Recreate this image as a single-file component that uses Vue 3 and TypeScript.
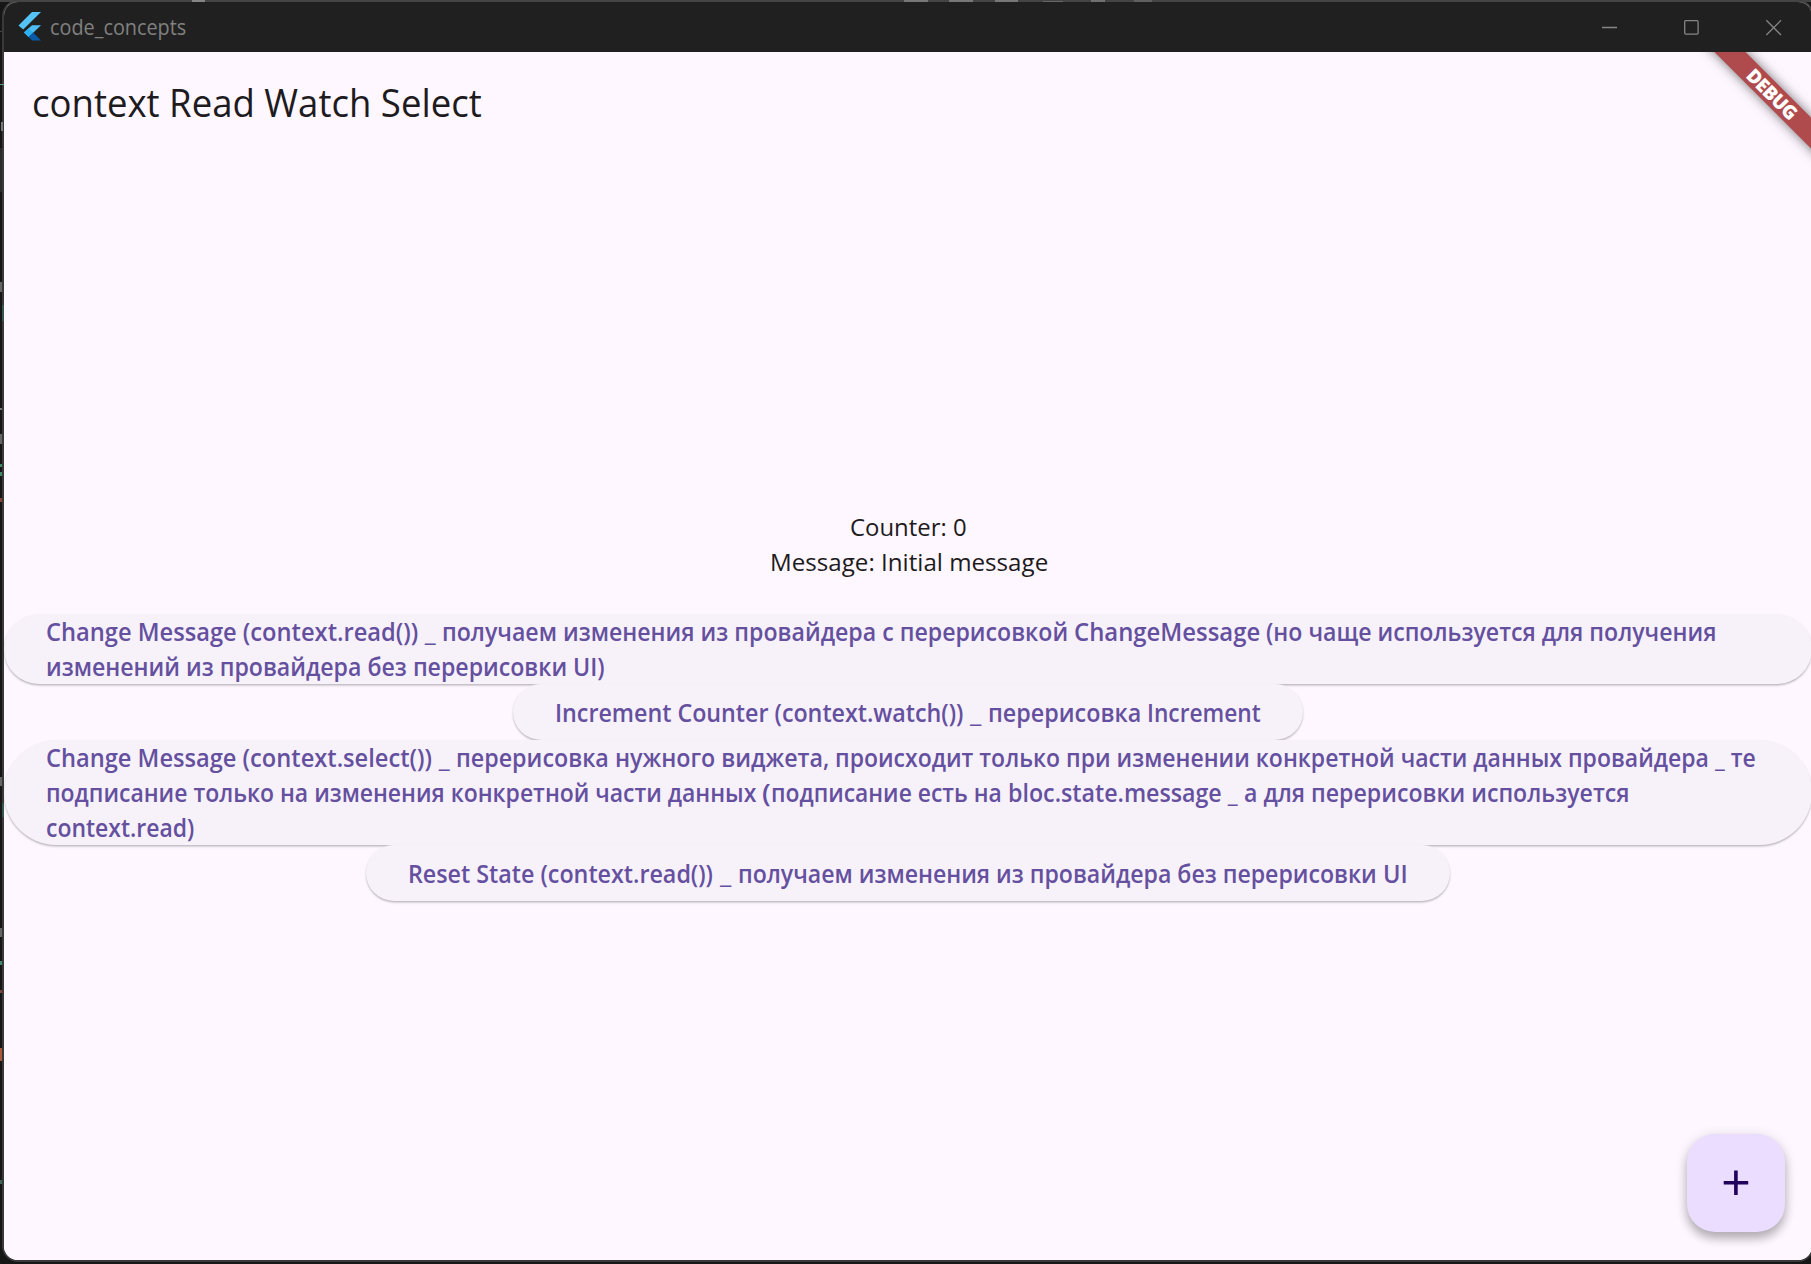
<template>
  <div class="desktop">
    <i v-for="(m, i) in marks" :key="i" class="mark" :style="{ left: m[0] + 'px', top: m[1] + 'px', width: m[2] + 'px', height: m[3] + 'px', background: m[4] }"></i>
    <div class="window">
      <header class="titlebar">
        <svg class="logo" width="24" height="30" viewBox="0 0 24 30">
          <path d="M14 0H23L5.2 17.5L0.5 13.5Z" fill="#56c3f7" />
          <path d="M14 13.2H23L15.2 20.8L10.6 25L6 20.6Z" fill="#4fbdf5" />
          <path d="M10.6 16.2L15.2 20.8L10.6 25L6 20.6Z" fill="#2cb0f0" />
          <path d="M10.6 25L15.2 20.6L23 28.4H14Z" fill="#0a5aa5" />
        </svg>
        <FitText class="caption" :parts="[['code_concepts', 136]]" />
        <svg class="controls" width="200" height="48" viewBox="0 0 200 48" fill="none" stroke="#858585" stroke-width="1.3">
          <path d="M2 24.5H17" />
          <rect x="84.7" y="17.7" width="13.4" height="13.4" rx="1" />
          <path d="M166.3 17.3L181 32M181 17.3L166.3 32" />
        </svg>
      </header>
      <main class="client">
        <h1 class="title"><FitText :parts="[['context Read Watch Select', 450]]" /></h1>
        <div class="banner"><span>DEBUG</span></div>
        <section class="content">
          <p><FitText :parts="[['Counter: 0', 117]]" /></p>
          <p><FitText :parts="[['Message: Initial message', 278]]" /></p>
          <div class="actions">
            <button v-for="(b, i) in buttons" :key="i" :class="{ wide: b.wide }">
              <FitText v-for="(line, j) in b.lines" :key="j" :parts="line" />
            </button>
          </div>
        </section>
        <button class="fab" aria-label="Increment">
          <svg width="26" height="26" viewBox="0 0 26 26"><path d="M0.7 12.8H25.2M12.9 0.6V25" stroke="#21005d" stroke-width="3.6" /></svg>
        </button>
      </main>
    </div>
  </div>
</template>

<script setup lang="ts">
import { defineComponent, h, onMounted, ref } from 'vue'

type Part = [string, number]

// Runs of text, each condensed or widened to its own width.
const FitText = defineComponent({
  props: { parts: { type: Array as () => Part[], required: true } },
  setup(props) {
    const root = ref<HTMLElement>()
    const scales = ref<number[]>(props.parts.map(() => 1))
    onMounted(() => {
      const runs = Array.from(root.value!.querySelectorAll<HTMLElement>('.run'))
      scales.value = runs.map((el, i) => props.parts[i][1] / el.offsetWidth)
    })
    return () =>
      h('span', { ref: root, class: 'fit' }, props.parts.map(([text, width], i) =>
        h('span', { class: 'slot', style: { width: `${width}px` } }, [
          h('span', { class: 'run', style: { transform: `scaleX(${scales.value[i]})` } }, text),
        ]),
      ))
  },
})

const buttons: { wide: boolean; lines: Part[][] }[] = [
  {
    wide: true,
    lines: [
      [['Change Message (context.read())', 372], [' _ ', 24], ['получаем изменения из провайдера с перерисовкой ', 632], ['ChangeMessage ', 192], ['(но чаще используется для получения', 450]],
      [['изменений из провайдера без перерисовки UI)', 559]],
    ],
  },
  {
    wide: false,
    lines: [[['Increment Counter (context.watch())', 408], [' _ ', 25], ['перерисовка ', 159], ['Increment', 114]]],
  },
  {
    wide: true,
    lines: [
      [['Change Message (context.select())', 386], [' _ ', 24], ['перерисовка нужного виджета, ', 379], ['происходит только при изменении конкретной части данных провайдера _ те', 921]],
      [['подписание только на изменения конкретной части данных ', 716], ['(', 9], ['подписание есть на ', 237], ['bloc.state.message _ ', 236], ['а для перерисовки используется', 386]],
      [['context.read)', 148]],
    ],
  },
  {
    wide: false,
    lines: [[['Reset State (context.read())', 305], [' _ ', 25], ['получаем изменения из провайдера без перерисовки ', 645], ['UI', 25]]],
  },
]

// Slivers of the windows behind, seen along the top and left edges.
const marks: [number, number, number, number, string][] = [
  [192, 0, 13, 2, '#858585'],
  [904, 0, 24, 2, '#777'],
  [949, 0, 24, 2, '#777'],
  [995, 0, 23, 2, '#777'],
  [1043, 1, 20, 1, '#666'],
  [1091, 0, 14, 2, '#707070'],
  [1134, 0, 18, 2, '#606060'],
  [0, 31, 2, 1, '#444'],
  [0, 84, 4, 1, '#5d9c80'],
  [1, 122, 2, 9, '#77777c'],
  [0, 148, 2, 44, '#2a2a2a'],
  [0, 282, 2, 10, '#666'],
  [2, 305, 2, 16, '#35544f'],
  [0, 408, 2, 2, '#777'],
  [0, 434, 2, 10, '#666'],
  [0, 464, 2, 3, '#3f8a68'],
  [0, 472, 2, 4, '#3f8a68'],
  [0, 498, 2, 4, '#84443c'],
  [0, 777, 2, 9, '#666'],
  [2, 803, 2, 14, '#35544f'],
  [0, 928, 2, 9, '#666'],
  [0, 961, 2, 4, '#3f8a68'],
  [0, 990, 2, 3, '#84443c'],
  [0, 1048, 2, 13, '#a8593c'],
  [0, 1180, 2, 4, '#3f6656'],
]
</script>

<style>
html,
body {
  margin: 0;
  background: #141414;
}
.fit {
  display: flex;
  white-space: pre;
}
.slot {
  display: block;
  flex: none;
}
.run {
  display: inline-block;
  transform-origin: 0 50%;
}
</style>

<style scoped>
.desktop {
  position: relative;
  box-sizing: border-box;
  width: 1811px;
  height: 1264px;
  overflow: hidden;
  padding: 0 0 0 2px;
  background: linear-gradient(#444 0 2px, #161616 2px);
  font-family: 'Open Sans', 'Noto Sans', sans-serif;
}
.mark {
  position: absolute;
  z-index: 2;
}
.window {
  box-sizing: border-box;
  width: 1812px;
  height: 1262px;
  border: 2px solid #3a3839;
  border-top-color: #444;
  border-radius: 16px;
  overflow: hidden;
  background: #fef7ff;
  display: flex;
  flex-direction: column;
}
.titlebar {
  height: 50px;
  flex: none;
  display: flex;
  align-items: center;
  background: #202020;
  color: #808080;
}
.logo {
  margin: 0 8px 0 14px;
}
.caption {
  font-size: 21px;
  line-height: 28px;
  flex: 1;
}
.controls {
  flex: none;
  margin-right: 12px;
}
.client {
  position: relative;
  flex: 1;
  overflow: hidden;
  background: #fef7ff;
  color: #1d1b20;
}
.title {
  margin: 0;
  padding: 22px 0 0 28px;
  font-size: 38.5px;
  line-height: 56px;
  font-weight: 370;
}
.banner {
  position: absolute;
  top: 31px;
  right: -65px;
  width: 210px;
  height: 22px;
  transform: rotate(45deg);
  background: #b04b4d;
  box-shadow: 0 0 12px rgba(0, 0, 0, 0.55);
  color: #fff;
  text-align: center;
  font-size: 19px;
  letter-spacing: -0.6px;
  font-weight: 800;
  line-height: 22px;
}
.content {
  display: flex;
  flex-direction: column;
  align-items: center;
  padding-top: 379px;
  font-size: 24.5px;
  line-height: 35px;
  font-weight: 370;
}
.content p {
  margin: 0 0 0 1px;
}
.actions {
  width: 100%;
  margin-top: 35px;
  display: flex;
  flex-direction: column;
  align-items: center;
}
.actions button {
  font: 600 24.5px/35px 'Open Sans', 'Noto Sans', sans-serif;
  color: #65509f;
  background: #f7f2fa;
  border: 0;
  border-radius: 60px;
  min-height: 56px;
  padding: 0 42px;
  box-shadow: 0 1.5px 2px rgba(0, 0, 0, 0.26);
  position: relative;
  text-align: left;
}
.actions .wide {
  width: 100%;
}
.fab {
  position: absolute;
  right: 27px;
  bottom: 28px;
  width: 98px;
  height: 98px;
  border: 0;
  border-radius: 28px;
  background: #eaddff;
  display: flex;
  align-items: center;
  justify-content: center;
  padding: 0;
  box-shadow: 0 7px 10px rgba(0, 0, 0, 0.24), 0 2px 14px rgba(0, 0, 0, 0.12);
}
</style>
